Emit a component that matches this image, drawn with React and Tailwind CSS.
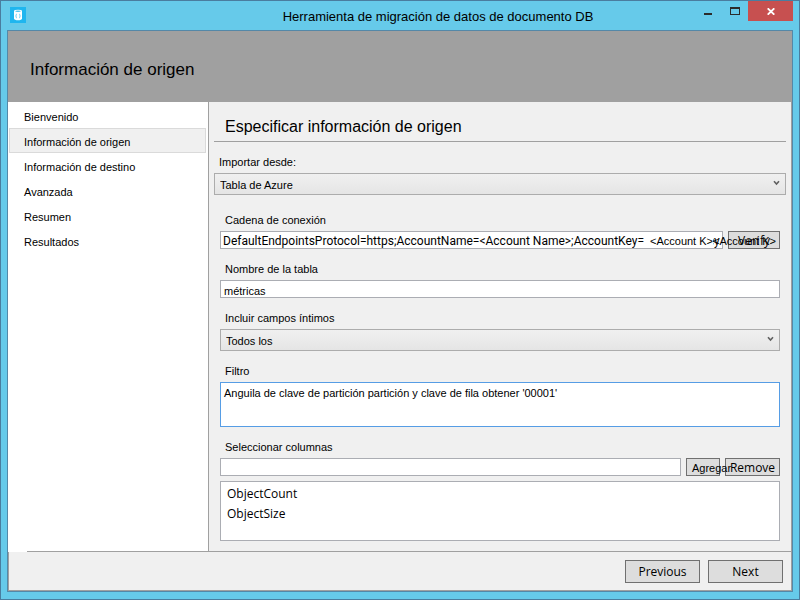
import React, { useId } from "react";

const steps = [
  "Bienvenido",
  "Información de origen",
  "Información de destino",
  "Avanzada",
  "Resumen",
  "Resultados",
];

const sans = "font-['Liberation_Sans',Arial,sans-serif]";
const ui = "font-['Open_Sans','Segoe_UI',sans-serif]";

function Field({ label, className = "", children }) {
  const id = useId();
  return (
    <div className={`flex flex-col ${className}`}>
      <label htmlFor={id} className="mt-3 mb-[3px] pl-[5px] text-[11px] leading-4">
        {label}
      </label>
      {children(id)}
    </div>
  );
}

function Dropdown({ id, value }) {
  return (
    <div className="relative flex">
      <select
        id={id}
        defaultValue={value}
        className="h-[22px] w-full appearance-none rounded-none border border-[#acacac] bg-linear-to-b from-[#f0f0f0] to-[#e5e5e5] pt-[2px] pl-[5px] text-[11px] leading-4 outline-none"
      >
        <option>{value}</option>
      </select>
      <svg
        aria-hidden="true"
        viewBox="0 0 7 6"
        className="pointer-events-none absolute top-[7px] right-[6px] h-[6px] w-[7px]"
      >
        <path d="M1 1.2 L3.5 4 L6 1.2" fill="none" stroke="#606060" strokeWidth="1.6" />
      </svg>
    </div>
  );
}

const button =
  "flex items-center justify-center border border-[#707070] bg-[#dddddd] whitespace-nowrap text-black";
const box = "min-w-0 border border-[#abadb3] bg-white outline-none";

function TitleBar() {
  return (
    <header className="flex h-[29px] items-start">
      <svg aria-hidden="true" viewBox="0 0 16 16" className="mt-[6px] ml-[9px] h-4 w-4 shrink-0">
        <rect width="16" height="16" fill="#1fb6ef" />
        <path d="M4 4.2v7.6c0 .9 1.8 1.5 4 1.5s4-.6 4-1.5V4.2z" fill="#fff" />
        <ellipse cx="8" cy="4.2" rx="4" ry="1.4" fill="#fff" />
        <ellipse cx="8" cy="4.3" rx="2.8" ry="0.7" fill="#4cc4f0" />
        <path d="M6.8 7c-1 .3-.3 1.5-1.2 2 .9.5.2 1.7 1.2 2M9.2 7c1 .3.3 1.5 1.2 2-.9.5-.2 1.7-1.2 2" fill="none" stroke="#4cc4f0" strokeWidth="0.9" />
      </svg>
      <h1 className="min-w-0 flex-1 pt-[6px] pl-[156px] text-center text-[13px] leading-5">
        Herramienta de migración de datos de documento DB
      </h1>
      <div className="flex">
        <button type="button" aria-label="Minimizar" className="flex h-5 w-[27px] items-center justify-center">
          <svg viewBox="0 0 10 10" className="h-[10px] w-[10px]">
            <rect x="1" y="7" width="8" height="2" fill="#2b2b2b" />
          </svg>
        </button>
        <button type="button" aria-label="Maximizar" className="flex h-5 w-[27px] items-center justify-center">
          <svg viewBox="0 0 10 8" className="h-2 w-[10px]">
            <path d="M0 0h10v8H0z M1 2v5h8V2z" fill="#2b2b2b" fillRule="evenodd" />
          </svg>
        </button>
        <button type="button" aria-label="Cerrar" className="mr-[6px] flex h-5 w-[45px] items-center justify-center bg-[#c75050]">
          <svg viewBox="0 0 8 7" className="h-[7px] w-2">
            <path d="M0.7 0.3 L7.3 6.7 M7.3 0.3 L0.7 6.7" stroke="#fff" strokeWidth="1.8" />
          </svg>
        </button>
      </div>
    </header>
  );
}

export default function App() {
  return (
    <div className={`flex min-h-screen flex-col border border-[#4a7d9f] bg-[#66caea] text-black ${sans}`}>
      <TitleBar />
      <div className="mx-[6px] mb-[7px] flex flex-1 flex-col border border-[#5488a8] bg-[#f0f0f0]">
        <div className="flex h-[71px] items-center bg-[#a0a0a0] px-[22px] pt-[6px]">
          <h2 className="text-[17px] leading-6">Información de origen</h2>
        </div>
        <div className="flex flex-1 border-r border-[#a0a0a0]">
          <nav className="w-[201px] shrink-0 border-r border-[#a0a0a0] bg-white pt-px pr-[2px] pl-px">
            <ul>
              {steps.map((s, i) => (
                <li key={s}>
                  <a
                    href="#"
                    aria-current={i === 1 ? "step" : undefined}
                    className={`flex h-[25px] items-center border px-[14px] pt-[3px] text-[11px] leading-4 ${
                      i === 1 ? "border-[#dadada] bg-[#f0f0f0]" : "border-transparent"
                    }`}
                  >
                    {s}
                  </a>
                </li>
              ))}
            </ul>
          </nav>
          <main className="flex min-w-0 flex-1 flex-col px-[5px] pb-[10px]">
            <h3 className="flex h-10 items-center border-b border-[#a0a0a0] px-[11px] pt-[11px] text-[16px] leading-6">
              Especificar información de origen
            </h3>
            <Field label="Importar desde:">{(id) => <Dropdown id={id} value="Tabla de Azure" />}</Field>
            <form className="flex flex-1 flex-col px-[6px] pt-[5px]">
              <Field label="Cadena de conexión">
                {(id) => (
                  <div className="relative flex gap-[5px]">
                    <input
                      id={id}
                      defaultValue="DefaultEndpointsProtocol=https;AccountName=<Account Name>;AccountKey= <Account Key"
                      className={`${box} h-[18px] flex-1 pt-px pl-[2px] font-['Roboto','Segoe_UI',sans-serif] text-[12px]`}
                    />
                    <button type="button" className={`${button} ${ui} h-[18px] w-[52px] pt-px text-[12px]`}>
                      Verify
                    </button>
                    <div className="pointer-events-none absolute top-[3px] right-[4px] flex text-[11px] leading-[14px]">
                      <span className="bg-white pl-1">&lt;Account K&gt;</span>
                      <span>&lt;Account K&gt;</span>
                    </div>
                  </div>
                )}
              </Field>
              <Field label="Nombre de la tabla">
                {(id) => (
                  <input id={id} defaultValue="métricas" className={`${box} h-[18px] px-[3px] pt-[3px] text-[11px]`} />
                )}
              </Field>
              <Field label="Incluir campos íntimos">{(id) => <Dropdown id={id} value="Todos los" />}</Field>
              <Field label="Filtro">
                {(id) => (
                  <textarea
                    id={id}
                    defaultValue="Anguila de clave de partición partición y clave de fila obtener '00001'"
                    className="h-[45px] resize-none border border-[#569de5] bg-white px-[3px] pt-[2px] text-[11px] leading-4 outline-none"
                  />
                )}
              </Field>
              <Field label="Seleccionar columnas">
                {(id) => (
                  <div className="flex gap-[5px]">
                    <input id={id} className={`${box} h-[18px] flex-1 px-[3px] text-[12px]`} />
                    <button type="button" className="relative z-10 flex h-[18px] w-[34px] items-center border border-[#707070] bg-[#dddddd] pt-[3px] pl-[5px] text-[11px] whitespace-nowrap">
                      Agregar
                    </button>
                    <button type="button" className={`${button} ${ui} h-[18px] w-[55px] pt-px text-[12px]`}>
                      Remove
                    </button>
                  </div>
                )}
              </Field>
              <ul className={`mt-[5px] min-h-[60px] flex-1 border border-[#abadb3] bg-white px-[6px] pt-[2px] text-[12px] leading-5 ${ui}`}>
                <li>ObjectCount</li>
                <li>ObjectSize</li>
              </ul>
            </form>
          </main>
        </div>
        <div aria-hidden="true" className="flex h-px">
          <span className="w-[19px] bg-white" />
          <span className="flex-1 bg-[#a0a0a0]" />
        </div>
        <footer className={`flex h-[39px] items-start justify-end gap-2 border-x border-b border-[#a0a0a0] px-2 pt-2 text-[12px] ${ui}`}>
          <button type="button" className={`${button} h-[23px] w-[75px]`}>Previous</button>
          <button type="button" className={`${button} h-[23px] w-[75px]`}>Next</button>
        </footer>
      </div>
    </div>
  );
}
